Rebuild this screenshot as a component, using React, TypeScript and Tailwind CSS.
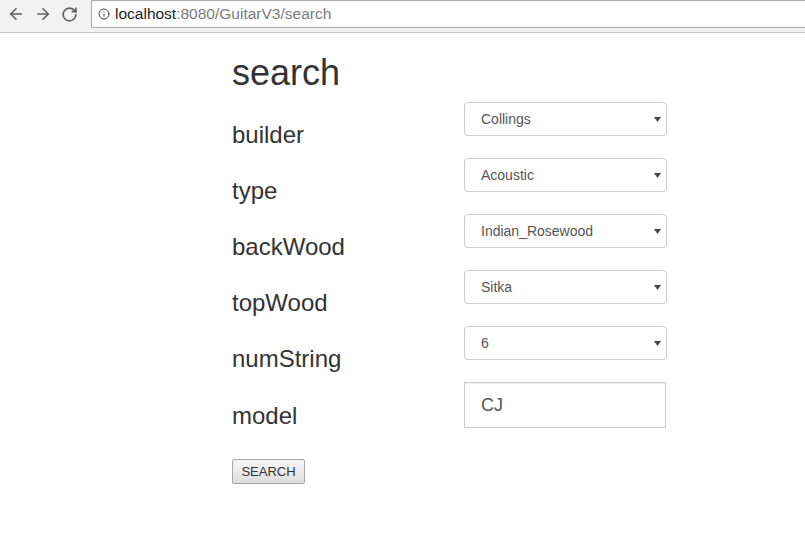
import { ArrowLeft, ArrowRight, RotateCw, Info } from "lucide-react";

const fields = [
  { label: "builder", value: "Collings" },
  { label: "type", value: "Acoustic" },
  { label: "backWood", value: "Indian_Rosewood" },
  { label: "topWood", value: "Sitka" },
  { label: "numString", value: "6" },
];

function SelectBox({ value }: { value: string }) {
  return (
    <div className="relative h-[34px] w-[203px]">
      <select
        defaultValue={value}
        className="h-full w-full appearance-none rounded-[4px] border border-[#ccc] bg-white pl-[16px] text-[14px] text-[#555] outline-none"
      >
        <option>{value}</option>
      </select>
      <svg width="7" height="5" viewBox="0 0 7 5" className="pointer-events-none absolute right-[6px] top-[15px]">
        <path d="M0 0 L7 0 L3.5 5 Z" fill="#444" />
      </svg>
    </div>
  );
}

export default function App() {
  return (
    <div className="min-h-[535px] bg-white font-['Liberation_Sans',Arial,sans-serif] text-[#333]">
      {/* browser chrome */}
      <div className="h-[33px] border-b border-[#c8c8c8] bg-[#f2f2f2]">
        <div className="flex h-[28px] items-center">
          <div className="flex w-[91px] items-center gap-[9px] pl-[7px] text-[#5f5f5f]">
            <ArrowLeft size={18} strokeWidth={2.2} />
            <ArrowRight size={18} strokeWidth={2.2} />
            <RotateCw size={17} strokeWidth={2.4} />
          </div>
          <div className="flex h-[28px] flex-1 items-center gap-[5px] rounded-l-[2px] border border-r-0 border-[#a9a9a9] bg-white pl-[6px]">
            <Info size={12} strokeWidth={2} className="text-[#444]" />
            <span className="text-[15.5px]">
              <span className="text-[#222]">localhost</span>
              <span className="text-[#7a7a7a]">:8080/GuitarV3/search</span>
            </span>
          </div>
        </div>
      </div>

      <div className="pl-[232px]">
        <h1 className="mt-[20px] text-[36px] leading-[40px]">search</h1>

        <div className="mt-[9px]">
          {fields.map((f) => (
            <div key={f.label} className="flex h-[56px] items-start">
              <div className="mt-[20px] w-[232px] text-[24px] leading-[26px]">{f.label}</div>
              <SelectBox value={f.value} />
            </div>
          ))}
          <div className="flex h-[46px] items-start">
            <div className="mt-[21px] w-[232px] text-[24px] leading-[26px]">model</div>
            <input
              defaultValue="CJ"
              className="h-[46px] w-[202px] border border-[#ccc] bg-white pl-[16px] text-[18px] text-[#555] shadow-[inset_0_1px_1px_rgba(0,0,0,0.075)] outline-none"
            />
          </div>
        </div>

        <button className="mt-[31px] h-[25px] w-[73px] rounded-[2px] border border-[#a6a6a6] bg-gradient-to-b from-[#f7f7f7] to-[#dddddd] text-[13px] text-[#333]">
          SEARCH
        </button>
      </div>
    </div>
  );
}
